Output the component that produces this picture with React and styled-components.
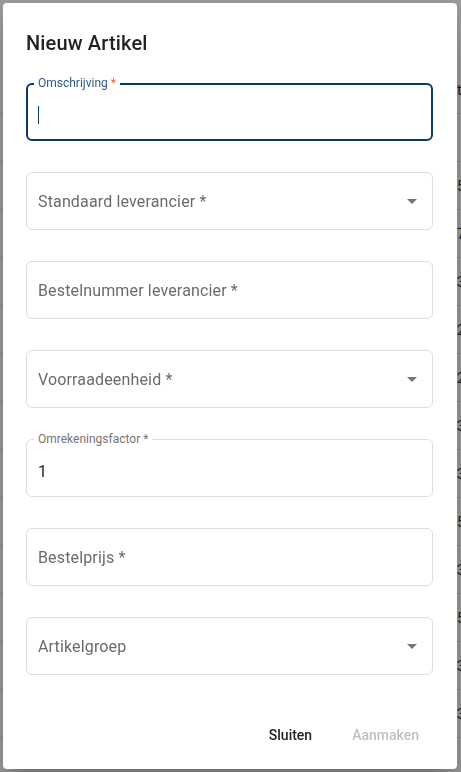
import React from 'react';
import styled, { createGlobalStyle } from 'styled-components';

const GlobalStyle = createGlobalStyle`
  html, body {
    margin: 0;
    padding: 0;
    height: 100%;
    overflow: hidden;
    font-family: Roboto, 'Liberation Sans', sans-serif;
  }
`;

// Background page (peeks out behind the dialog)
const Page = styled.div`
  background: #ffffff;
  width: 461px;
  height: 772px;
  overflow: hidden;
  padding-top: 66px;
  box-sizing: border-box;
`;

const BgRow = styled.div`
  display: flex;
  align-items: center;
  height: 48px;
  border-bottom: 1px solid #e4e4e4;
  box-sizing: border-box;
  font-size: 14px;
  color: #333;
`;

const BgCell = styled.div`
  width: ${(p) => p.width};
  flex-shrink: 0;
  white-space: nowrap;
  overflow: hidden;
`;

const Overlay = styled.div`
  position: fixed;
  inset: 0;
  background: rgba(0, 0, 0, 0.4);
`;

// Dialog
const Dialog = styled.div`
  position: fixed;
  left: 3px;
  top: 3px;
  width: 454px;
  height: 766px;
  box-sizing: border-box;
  background: #fff;
  border-radius: 4px;
  box-shadow: 0 11px 15px -7px rgba(0, 0, 0, 0.2), 0 24px 38px 3px rgba(0, 0, 0, 0.14);
  display: flex;
  flex-direction: column;
  padding: 24px 24px 16px 23px;
`;

const Title = styled.h2`
  margin: 0;
  font-size: 20px;
  font-weight: 500;
  line-height: 32px;
  color: rgba(0, 0, 0, 0.87);
  letter-spacing: 0.15px;
`;

const Fields = styled.div`
  display: flex;
  flex-direction: column;
  gap: 31px;
  margin-top: 24px;
`;

const Field = styled.div`
  position: relative;
  height: 58px;
  width: 407px;
  box-sizing: border-box;
  border: ${(p) => (p.focused ? '2px solid #0a3a6b' : '1px solid #dedede')};
  border-radius: 6px;
  display: flex;
  align-items: center;
  padding: ${(p) => (p.focused ? '6px 7px 0 10px' : '0 7px 0 11px')};
  padding-top: ${(p) => (p.filled ? '6px' : undefined)};
`;

const FloatLabel = styled.span`
  position: absolute;
  left: ${(p) => (p.focused ? '6px' : '7px')};
  top: ${(p) => (p.focused ? '-9px' : '-8px')};
  padding: 0 4px;
  background: #fff;
  font-size: 12px;
  line-height: 14px;
  color: ${(p) => (p.focused ? '#2d5a8a' : '#757575')};
  white-space: nowrap;
`;

const Required = styled.span`
  color: ${(p) => (p.focused ? '#e8603c' : 'inherit')};
`;

const Placeholder = styled.span`
  flex: 1;
  font-size: 16px;
  color: #6b6b6b;
  letter-spacing: 0.15px;
`;

const Value = styled.span`
  flex: 1;
  font-size: 16px;
  color: #222;
`;

const Caret = styled.span`
  display: inline-block;
  width: 1px;
  height: 18px;
  background: #0a3a6b;
`;

const Arrow = styled.svg`
  width: 24px;
  height: 24px;
  fill: rgba(0, 0, 0, 0.54);
  margin-right: 1px;
  flex-shrink: 0;
`;

const Actions = styled.div`
  margin-top: auto;
  display: flex;
  justify-content: flex-end;
  gap: 8px;
  margin-right: -2px;
`;

const Button = styled.button`
  border: none;
  background: none;
  font-family: Roboto, 'Liberation Sans', sans-serif;
  font-size: 14px;
  font-weight: 500;
  line-height: 24px;
  padding: 6px 16px;
  color: ${(p) => (p.disabled ? 'rgba(0,0,0,0.26)' : '#222')};
  letter-spacing: 0;
`;

const ArrowIcon = () => (
  <Arrow viewBox="0 0 24 24">
    <path d="M7 10l5 5 5-5z" />
  </Arrow>
);

const bgRows = ['t', '', '5', '7', '3', '2', '2', '3', '3', '5', '3', '5', '3', '3'];

export default function App() {
  return (
    <>
      <GlobalStyle />
      <Page>
        {bgRows.map((v, i) => (
          <BgRow key={i}>
            <BgCell width="457px" />
            <BgCell width="4px">{v}</BgCell>
          </BgRow>
        ))}
        <BgRow>
          <BgCell width="210px" />
          <BgCell width="200px">Lu ne schoonm status</BgCell>
        </BgRow>
      </Page>
      <Overlay />
      <Dialog>
        <Title>Nieuw Artikel</Title>
        <Fields>
          <Field focused>
            <FloatLabel focused>
              Omschrijving <Required focused>*</Required>
            </FloatLabel>
            <Caret />
          </Field>
          <Field>
            <Placeholder>Standaard leverancier *</Placeholder>
            <ArrowIcon />
          </Field>
          <Field>
            <Placeholder>Bestelnummer leverancier *</Placeholder>
          </Field>
          <Field>
            <Placeholder>Voorraadeenheid *</Placeholder>
            <ArrowIcon />
          </Field>
          <Field filled>
            <FloatLabel>
              Omrekeningsfactor <Required>*</Required>
            </FloatLabel>
            <Value>1</Value>
          </Field>
          <Field>
            <Placeholder>Bestelprijs *</Placeholder>
          </Field>
          <Field>
            <Placeholder>Artikelgroep</Placeholder>
            <ArrowIcon />
          </Field>
        </Fields>
        <Actions>
          <Button>Sluiten</Button>
          <Button disabled>Aanmaken</Button>
        </Actions>
      </Dialog>
    </>
  );
}
